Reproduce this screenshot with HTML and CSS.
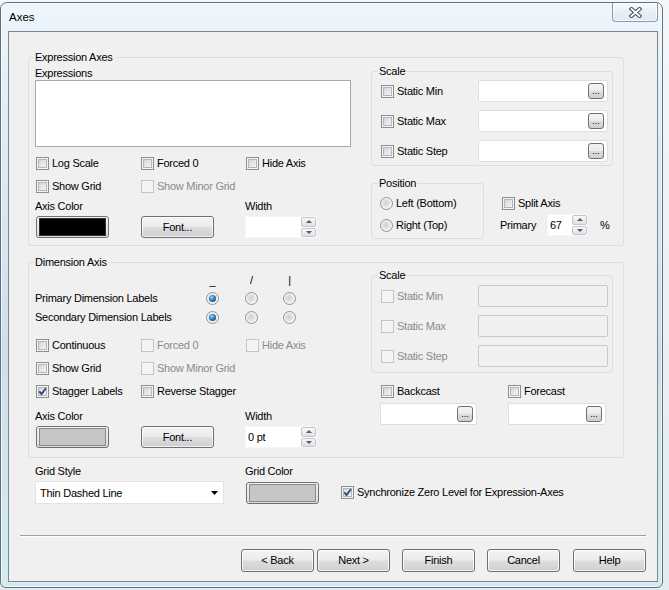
FILE: index.html
```html
<!DOCTYPE html>
<html>
<head>
<meta charset="utf-8">
<title>Axes</title>
<link rel="stylesheet" href="styles.css">
</head>
<body>
<div class="window">
  <div class="titlebar">
    <span class="title">Axes</span>
    <div class="close">
      <svg width="13" height="11" viewBox="0 0 13 11"><path d="M2.5 2 L10.5 9 M10.5 2 L2.5 9" stroke="#4e5966" stroke-width="4" stroke-linecap="square" fill="none"/><path d="M2.5 2 L10.5 9 M10.5 2 L2.5 9" stroke="#ffffff" stroke-width="1.8" stroke-linecap="square" fill="none"/></svg>
    </div>
  </div>
  <div class="client">
    <div class="group g1">
      <span class="legend">Expression Axes</span>
      <div class="gbody">
        <div class="lcol">
          <div class="lbl mt3">Expressions</div>
          <div class="listbox"></div>
          <div class="crow mt9">
            <label class="chk"><span class="cb"></span>Log Scale</label>
            <label class="chk"><span class="cb"></span>Forced 0</label>
            <label class="chk"><span class="cb"></span>Hide Axis</label>
          </div>
          <div class="crow mt8">
            <label class="chk"><span class="cb"></span>Show Grid</label>
            <label class="chk dis"><span class="cb"></span>Show Minor Grid</label>
          </div>
          <div class="crow lblrow mt6">
            <span class="lbl">Axis Color</span><span></span><span class="lbl">Width</span>
          </div>
          <div class="crow btnrow mt3">
            <div class="colorbtn"><div class="swatch black"></div></div>
            <div class="btn fontbtn">Font...</div>
            <div class="spin"><span class="val"></span><span class="arrows"><span class="ab up"></span><span class="ab dn"></span></span></div>
          </div>
        </div>
        <div class="rcol">
          <div class="group sbox s1">
            <span class="legend">Scale</span>
            <div class="srows">
              <div class="srow"><label class="chk"><span class="cb"></span>Static Min</label><div class="edit"><span class="dots">...</span></div></div>
              <div class="srow"><label class="chk"><span class="cb"></span>Static Max</label><div class="edit"><span class="dots">...</span></div></div>
              <div class="srow"><label class="chk"><span class="cb"></span>Static Step</label><div class="edit"><span class="dots">...</span></div></div>
            </div>
          </div>
          <div class="posrow">
            <div class="group pbox">
              <span class="legend">Position</span>
              <label class="rad r1"><span class="rb"></span>Left (Bottom)</label>
              <label class="rad r2"><span class="rb"></span>Right (Top)</label>
            </div>
            <div class="split">
              <label class="chk"><span class="cb"></span>Split Axis</label>
              <div class="primrow">
                <span class="plbl">Primary</span>
                <div class="spin sp67"><span class="val">67</span><span class="arrows"><span class="ab up"></span><span class="ab dn"></span></span></div>
                <span class="pct">%</span>
              </div>
            </div>
          </div>
        </div>
      </div>
    </div>

    <div class="group g2">
      <span class="legend">Dimension Axis</span>
      <div class="gbody">
        <div class="lcol">
          <div class="rgrid mt3"><span></span><span class="h u">_</span><span class="h">/</span><span class="h">|</span></div>
          <div class="rgrid mt7"><span class="lbl">Primary Dimension Labels</span><span class="rb on"></span><span class="rb"></span><span class="rb"></span></div>
          <div class="rgrid mt6"><span class="lbl">Secondary Dimension Labels</span><span class="rb on"></span><span class="rb"></span><span class="rb"></span></div>
          <div class="crow mt14">
            <label class="chk"><span class="cb"></span>Continuous</label>
            <label class="chk dis"><span class="cb"></span>Forced 0</label>
            <label class="chk dis"><span class="cb"></span>Hide Axis</label>
          </div>
          <div class="crow mt8">
            <label class="chk"><span class="cb"></span>Show Grid</label>
            <label class="chk dis"><span class="cb"></span>Show Minor Grid</label>
          </div>
          <div class="crow mt8">
            <label class="chk"><span class="cb on"><svg width="9" height="9" viewBox="0 0 9 9"><path d="M1.2 4.3 L3.6 7 L7.9 1.3" stroke="#33477f" stroke-width="1.9" fill="none"/></svg></span>Stagger Labels</label>
            <label class="chk"><span class="cb"></span>Reverse Stagger</label>
          </div>
          <div class="crow lblrow mt11">
            <span class="lbl">Axis Color</span><span></span><span class="lbl">Width</span>
          </div>
          <div class="crow btnrow mt3">
            <div class="colorbtn"><div class="swatch gray"></div></div>
            <div class="btn fontbtn">Font...</div>
            <div class="spin"><span class="val">0 pt</span><span class="arrows"><span class="ab up"></span><span class="ab dn"></span></span></div>
          </div>
        </div>
        <div class="rcol">
          <div class="group sbox s2">
            <span class="legend">Scale</span>
            <div class="srows">
              <div class="srow"><label class="chk dis"><span class="cb"></span>Static Min</label><div class="edit dis"></div></div>
              <div class="srow"><label class="chk dis"><span class="cb"></span>Static Max</label><div class="edit dis"></div></div>
              <div class="srow"><label class="chk dis"><span class="cb"></span>Static Step</label><div class="edit dis"></div></div>
            </div>
          </div>
          <div class="bfrow">
            <label class="chk"><span class="cb"></span>Backcast</label>
            <label class="chk"><span class="cb"></span>Forecast</label>
          </div>
          <div class="bfedits">
            <div class="edit bc"><span class="dots">...</span></div>
            <div class="edit fc"><span class="dots">...</span></div>
          </div>
        </div>
      </div>
    </div>

    <div class="blabels"><span class="lbl gs">Grid Style</span><span class="lbl">Grid Color</span></div>
    <div class="bctrls">
      <div class="combo"><span>Thin Dashed Line</span><svg width="7" height="4" viewBox="0 0 7 4"><path d="M0 0 H7 L3.5 4 Z" fill="#000"/></svg></div>
      <div class="colorbtn gc"><div class="swatch gray"></div></div>
      <label class="chk sync"><span class="cb on"><svg width="9" height="9" viewBox="0 0 9 9"><path d="M1.2 4.3 L3.6 7 L7.9 1.3" stroke="#33477f" stroke-width="1.9" fill="none"/></svg></span>Synchronize Zero Level for Expression-Axes</label>
    </div>
    <div class="sep"></div>
    <div class="footer">
      <div class="btn">&lt; Back</div>
      <div class="btn ml3">Next &gt;</div>
      <div class="btn ml12">Finish</div>
      <div class="btn ml12">Cancel</div>
      <div class="btn ml13">Help</div>
    </div>
  </div>
</div>
</body>
</html>
```

FILE: styles.css
```css
* { box-sizing: border-box; }
html, body { margin: 0; padding: 0; }
body {
  width: 669px;
  height: 590px;
  overflow: hidden;
  background: linear-gradient(180deg, #f4f7fa 0%, #e3ebf1 100%);
  font-family: "Liberation Sans", Arial, sans-serif;
  font-size: 11px;
  letter-spacing: -0.25px;
  color: #000;
}

/* window frame */
.window {
  width: 663px;
  height: 586px;
  margin-top: 2px;
  border: 1px solid #65707c;
  border-radius: 7px 7px 6px 6px;
  background: linear-gradient(180deg, #eef6fb 0%, #dfedf7 20%, #cddfec 60%, #d4ebf2 100%);
  box-shadow: inset 0 0 0 1px rgba(255, 255, 255, 0.6);
  padding: 0 4px 5px 7px;
  display: flex;
  flex-direction: column;
}
.titlebar {
  height: 28px;
  display: flex;
  justify-content: space-between;
  align-items: flex-start;
}
.title {
  margin: 8px 0 0 1px;
  line-height: 13px;
  font-size: 11.5px;
  letter-spacing: 0;
}
.close {
  width: 46px;
  height: 19px;
  border: 1px solid #8d9aa7;
  border-top: none;
  border-radius: 0 0 4px 4px;
  background: linear-gradient(180deg, #f7fbfd 0%, #e8f0f6 50%, #dfe9f1 100%);
  box-shadow: inset 0 0 0 1px rgba(255, 255, 255, 0.7);
  display: flex;
  align-items: center;
  justify-content: center;
}
.close svg { display: block; }

.client {
  width: 650px;
  height: 551px;
  border: 1px solid #7a8896;
  background: #f0f0f0;
}

/* group boxes */
.group {
  border: 1px solid #d5dfe5;
  border-radius: 3px;
}
.legend {
  display: block;
  width: max-content;
  height: 13px;
  line-height: 13px;
  margin: -7px 0 0 5px;
  padding: 0 1px;
  background: #f0f0f0;
}
.g1 { width: 596px; height: 189px; margin: 25px 0 0 19px; }
.g2 { width: 596px; height: 196px; margin: 16px 0 0 19px; }
.gbody { display: flex; padding-left: 6px; }
.lcol { width: 316px; }
.rcol { width: 242px; margin-left: 20px; }

.lbl { display: block; height: 13px; line-height: 13px; white-space: nowrap; }
.mt3 { margin-top: 3px; }
.mt6 { margin-top: 6px; }
.mt7 { margin-top: 7px; }
.mt8 { margin-top: 8px; }
.mt9 { margin-top: 9px; }
.mt11 { margin-top: 11px; }
.mt14 { margin-top: 14px; }

.listbox {
  width: 316px;
  height: 67px;
  background: #fff;
  border: 1px solid #a9a9a9;
}

.crow {
  display: grid;
  grid-template-columns: 105px 105px 106px;
  height: 15px;
  align-items: center;
}
.crow.lblrow { height: 13px; }
.crow.btnrow { height: 22px; }

/* checkbox */
.chk {
  display: flex;
  align-items: center;
  gap: 3px;
  height: 15px;
  line-height: 13px;
  white-space: nowrap;
  margin-left: 1px;
}
.chk.dis { color: #8a8a8a; }
.cb {
  flex: none;
  width: 13px;
  height: 13px;
  border: 1px solid #8e8f8f;
  background: linear-gradient(135deg, #c8ccd1 0%, #e6e8ea 55%, #f9f9f9 100%);
  box-shadow: inset 0 0 0 1px #f4f4f4, inset 0 0 0 2px #b3b7bd;
  display: flex;
  align-items: center;
  justify-content: center;
}
.cb svg { display: block; }
.chk.dis .cb {
  border-color: #c5c5c5;
  background: #f4f4f4;
  box-shadow: none;
}

/* radio */
.rad {
  display: flex;
  align-items: center;
  gap: 3px;
  height: 13px;
  line-height: 13px;
  white-space: nowrap;
}
.rb {
  flex: none;
  display: block;
  width: 13px;
  height: 13px;
  border-radius: 50%;
  border: 1px solid #929292;
  background: radial-gradient(circle at 45% 45%, #cfd1d4 0%, #e1e2e4 40%, #f7f7f7 70%, #ffffff 100%);
  box-shadow: inset 0 0 0 1px #f3f3f3;
}
.rb.on::after {
  content: "";
  display: block;
  width: 7px;
  height: 7px;
  margin: 2px;
  border-radius: 50%;
  background: radial-gradient(circle at 40% 35%, #a8ddf8 0%, #3a91c9 35%, #0f4676 85%);
}

/* buttons */
.btn {
  height: 22px;
  border: 1px solid #707070;
  border-radius: 3px;
  background: linear-gradient(180deg, #f3f3f3 0%, #ebebeb 48%, #dddddd 52%, #cfcfcf 100%);
  box-shadow: inset 0 0 0 1px rgba(255, 255, 255, 0.75);
  text-align: center;
  line-height: 20px;
  white-space: nowrap;
}
.fontbtn { width: 73px; margin-left: 1px; }

.colorbtn {
  width: 73px;
  height: 22px;
  margin-left: 1px;
  border: 1px solid #707070;
  border-radius: 3px;
  padding: 1px 2px;
  background: linear-gradient(180deg, #f4f4f4 0%, #dcdcdc 100%);
}
.swatch { height: 100%; border: 1px solid #2f2f2f; }
.swatch.black { background: #000; }
.swatch.gray { background: #c6c6c6; border-color: #8a8a8a; }

/* spin */
.spin {
  display: flex;
  width: 72px;
  height: 22px;
  background: #fff;
  border: 1px solid #f6f6f6;
}
.spin .val { flex: 1; padding-left: 2px; line-height: 20px; }
.arrows {
  width: 15px;
  display: flex;
  flex-direction: column;
  gap: 1px;
}
.ab {
  flex: 1;
  border: 1px solid #c3c7cd;
  border-radius: 2px;
  background: linear-gradient(180deg, #f8f8f8 0%, #e1e1e1 100%);
  display: flex;
  align-items: center;
  justify-content: center;
}
.ab.up::before {
  content: "";
  border-left: 3px solid transparent;
  border-right: 3px solid transparent;
  border-bottom: 3px solid #4d5d75;
}
.ab.dn::before {
  content: "";
  border-left: 3px solid transparent;
  border-right: 3px solid transparent;
  border-top: 3px solid #4d5d75;
}

/* edit with browse button */
.edit {
  display: flex;
  align-items: center;
  justify-content: flex-end;
  width: 130px;
  height: 22px;
  padding-right: 3px;
  background: #fff;
  border: 1px solid #dedede;
  border-radius: 2px;
}
.edit.dis { background: #f0f0f0; border-color: #c9c9c9; }
.dots {
  width: 16px;
  height: 16px;
  border: 1px solid #707070;
  border-radius: 3px;
  background: linear-gradient(180deg, #f3f3f3 0%, #ebebeb 48%, #dddddd 52%, #cfcfcf 100%);
  font-size: 9px;
  letter-spacing: 0;
  line-height: 15px;
  text-align: center;
}

/* scale boxes */
.sbox { width: 242px; }
.s1 { height: 95px; margin-top: 7px; }
.s2 { height: 98px; margin-top: 6px; }
.sbox .legend, .pbox .legend { margin-left: 6px; }
.srows {
  display: flex;
  flex-direction: column;
  gap: 8px;
  padding-left: 9px;
}
.s1 .srows { margin-top: 2px; }
.s2 .srows { margin-top: 3px; }
.srow { display: flex; align-items: center; height: 22px; }
.srow .chk { width: 97px; margin-left: 0; }

/* position / split */
.posrow { display: flex; margin-top: 17px; }
.pbox { width: 113px; height: 56px; }
.pbox .rad { margin-left: 8px; }
.rad.r1 { margin-top: 7px; }
.rad.r2 { margin-top: 9px; }
.split { margin-left: 16px; }
.split .chk { margin: 13px 0 0 2px; }
.primrow { display: flex; align-items: center; height: 22px; margin-top: 3px; }
.plbl { width: 47px; }
.spin.sp67 { width: 41px; }
.pct { margin-left: 12px; }

/* dimension label grid */
.rgrid {
  display: grid;
  grid-template-columns: 171px 39px 38px 13px;
  height: 13px;
  align-items: center;
  line-height: 13px;
}
.rgrid .h { width: 13px; text-align: center; }
.rgrid .h.u { align-self: start; padding-top: 3px; }

.bfrow {
  display: grid;
  grid-template-columns: 127px auto;
  height: 15px;
  align-items: center;
  margin-top: 11px;
  padding-left: 10px;
}
.bfrow .chk { margin-left: 0; }
.bfedits { display: flex; margin-top: 4px; padding-left: 9px; }
.edit.bc { width: 97px; }
.edit.fc { width: 98px; margin-left: 31px; }

/* bottom */
.blabels { display: flex; margin-top: 7px; padding-left: 26px; }
.blabels .gs { width: 210px; }
.bctrls {
  display: flex;
  align-items: center;
  height: 23px;
  margin-top: 3px;
  padding-left: 26px;
}
.combo {
  width: 189px;
  height: 23px;
  background: #fff;
  border: 1px solid #e3e3e3;
  display: flex;
  align-items: center;
  justify-content: space-between;
  padding: 0 5px 0 4px;
}
.combo svg { display: block; }
.colorbtn.gc { margin-left: 22px; }
.chk.sync { margin-left: 22px; }

.sep {
  width: 626px;
  height: 2px;
  margin: 31px 0 0 11px;
  border-top: 1px solid #a0a0a0;
  border-bottom: 1px solid #ffffff;
}
.footer { display: flex; margin-top: 12px; padding-left: 232px; }
.footer .btn { width: 73px; height: 23px; line-height: 21px; }
.ml3 { margin-left: 3px; }
.ml12 { margin-left: 12px; }
.ml13 { margin-left: 13px; }
```
